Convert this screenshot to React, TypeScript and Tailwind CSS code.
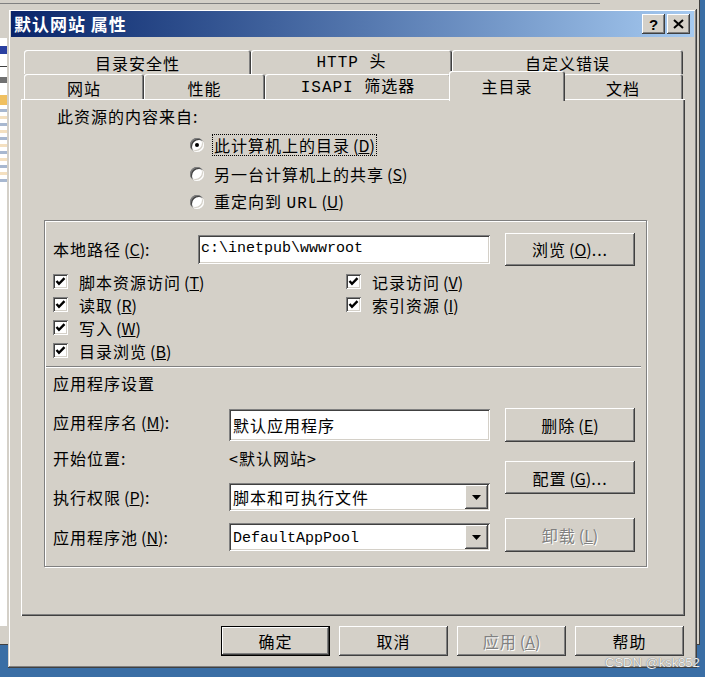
import React from "react";

const raised =
  "shadow-[inset_-1px_-1px_#404040,inset_1px_1px_#ffffff,inset_-2px_-2px_#808080,inset_2px_2px_#d4d0c8]";
const sunken =
  "shadow-[inset_1px_1px_#808080,inset_-1px_-1px_#ffffff,inset_2px_2px_#404040,inset_-2px_-2px_#d4d0c8]";
const mono = "font-['Liberation_Mono','Noto_Sans_CJK_SC',monospace]";
const dim = "text-[#808080] [text-shadow:1px_1px_0_#ffffff]";

const Key = ({ k }: { k: string }) => (
  <span className="ml-[3px] tracking-normal">
    (<u>{k}</u>)
  </span>
);

const Btn = ({
  children,
  className = "",
  disabled,
  primary,
}: {
  children: React.ReactNode;
  className?: string;
  disabled?: boolean;
  primary?: boolean;
}) => (
  <div
    className={`flex items-center justify-center bg-[#d4d0c8] ${
      primary
        ? "shadow-[inset_0_0_0_1px_#000000,inset_-2px_-2px_#404040,inset_2px_2px_#ffffff,inset_-3px_-3px_#808080]"
        : raised
    } ${disabled ? dim : ""} ${className}`}
  >
    {children}
  </div>
);

const Tab = ({ label, className = "" }: { label: React.ReactNode; className?: string }) => (
  <div
    className={`flex items-center justify-center rounded-t-[3px] bg-[#d4d0c8] pt-[2px] shadow-[inset_1px_1px_#ffffff,inset_-1px_0_#404040,inset_-2px_0_#808080] ${className}`}
  >
    {label}
  </div>
);

const Radio = ({
  label,
  checked,
  focused,
  className = "",
}: {
  label: React.ReactNode;
  checked?: boolean;
  focused?: boolean;
  className?: string;
}) => (
  <div className={`flex items-center ${className}`}>
    <div className={`flex h-[14px] w-[14px] items-center justify-center rounded-full bg-white ${sunken}`}>
      {checked && <div className="h-[4px] w-[4px] rounded-full bg-black" />}
    </div>
    <div
      className={`ml-[8px] px-[1px] leading-[20px] ${
        focused ? "border border-dotted border-black" : "border border-transparent"
      }`}
    >
      {label}
    </div>
  </div>
);

const Check = ({ label }: { label: React.ReactNode }) => (
  <div className="flex h-[23px] items-center">
    <div className={`flex h-[15px] w-[15px] items-center justify-center bg-white ${sunken}`}>
      <svg width="15" height="15" viewBox="0 0 15 15">
        <path d="M3.5 7 L6 9.8 L11.5 4.2" fill="none" stroke="#000" strokeWidth="2.4" />
      </svg>
    </div>
    <div className="ml-[11px] leading-[20px]">{label}</div>
  </div>
);

const Select = ({ value, className = "" }: { value: React.ReactNode; className?: string }) => (
  <div className={`flex h-[28px] w-[261px] items-center bg-white ${sunken} ${className}`}>
    <div className="flex-1 pl-[4px] leading-[20px]">{value}</div>
    <div className={`mr-[2px] flex h-[24px] w-[23px] items-center justify-center bg-[#d4d0c8] ${raised}`}>
      <svg width="9" height="5" viewBox="0 0 9 5">
        <polygon points="0,0 9,0 4.5,5" fill="#000" />
      </svg>
    </div>
  </div>
);

export default function App() {
  return (
    <div className="relative h-[677px] w-[705px] overflow-hidden bg-[#3a6ea5] font-['Noto_Sans_CJK_SC',sans-serif] text-[16px] tracking-[1px] text-black">
      {/* window behind the dialog */}
      <div className="absolute left-0 top-0 flex h-[645px] w-[700px] flex-col bg-[#d4d0c8] shadow-[inset_-1px_-1px_#404040]">
        <div className="mt-[3px] h-px w-[600px] bg-[#808080]" />
        <div className="mt-[34px] flex h-[588px] w-[7px] flex-col bg-white">
          <div className="mt-[8px] h-[8px] bg-[#2a3fa0]" />
          <div className="mt-[12px] h-px bg-[#404040]" />
          <div className="mt-[10px] h-[6px] bg-[#707070]" />
          <div className="mt-[12px] h-[10px] bg-[#f0c060]" />
          <div className="mt-[4px] h-[3px] bg-[#a8b8d0]" />
          <div className="mt-[4px] h-[3px] bg-[#f4e0c0]" />
          <div className="mt-[4px] h-[3px] bg-[#a8b8d0]" />
          <div className="mt-[4px] h-[3px] bg-[#f4e0c0]" />
          <div className="mt-[4px] h-[3px] bg-[#a8b8d0]" />
          <div className="mt-[4px] h-[3px] bg-[#f4e0c0]" />
          <div className="mt-[4px] h-[3px] bg-[#a8b8d0]" />
          <div className="mt-[4px] h-[3px] bg-[#f4e0c0]" />
          <div className="mt-[4px] h-[3px] bg-[#a8b8d0]" />
          <div className="mt-[4px] h-[3px] bg-[#f4e0c0]" />
          <div className="mt-[4px] h-[3px] bg-[#a8b8d0]" />
        </div>
      </div>

      {/* dialog */}
      <div className="absolute left-[8px] top-[9px] flex h-[659px] w-[689px] flex-col bg-[#d4d0c8] px-[3px] pt-[2px] shadow-[inset_-1px_-1px_#404040,inset_1px_1px_#d4d0c8,inset_-2px_-2px_#808080,inset_2px_2px_#ffffff]">
        <div className="flex h-[26px] items-center justify-between bg-linear-to-r from-[#0a246a] to-[#a6caf0] pl-[3px] pr-[4px]">
          <div className="text-[17px] font-bold leading-[22px] text-white">默认网站 属性</div>
          <div className="flex gap-[2px]">
            <div className={`flex h-[20px] w-[23px] items-center justify-center bg-[#d4d0c8] font-['Liberation_Sans',sans-serif] text-[15px] font-bold leading-none tracking-normal ${raised}`}>
              ?
            </div>
            <div className={`flex h-[20px] w-[23px] items-center justify-center bg-[#d4d0c8] ${raised}`}>
              <svg width="11" height="10" viewBox="0 0 11 10">
                <path d="M1 1 L10 9 M10 1 L1 9" stroke="#000" strokeWidth="2" />
              </svg>
            </div>
          </div>
        </div>

        <div className="ml-[10px] mt-[13px] flex w-[664px] flex-col">
          {/* tabs */}
          <div className="flex h-[24px] pl-[3px]">
            <Tab className="w-[227px]" label="目录安全性" />
            <Tab className={`w-[201px] ${mono}`} label="HTTP 头" />
            <Tab className="w-[231px]" label="自定义错误" />
          </div>
          <div className="flex h-[25px] items-end pl-[3px]">
            <Tab className="h-[25px] w-[120px]" label="网站" />
            <Tab className="h-[25px] w-[121px]" label="性能" />
            <Tab className={`h-[25px] w-[186px] ${mono}`} label="ISAPI 筛选器" />
            <div className="relative z-10 -mx-[2px] -mb-[2px] flex h-[30px] w-[116px] items-center justify-center rounded-t-[3px] bg-[#d4d0c8] shadow-[inset_1px_1px_#ffffff,inset_-1px_0_#404040,inset_-2px_0_#808080]">
              主目录
            </div>
            <Tab className="h-[25px] w-[120px]" label="文档" />
          </div>

          {/* panel */}
          <div className="flex h-[517px] flex-col bg-[#d4d0c8] shadow-[inset_1px_1px_#ffffff,inset_-1px_-1px_#404040,inset_-2px_-2px_#808080]">
            <div className="ml-[36px] mt-[7px] h-[20px] leading-[20px]">此资源的内容来自:</div>
            <div className="ml-[169px] mt-[5px] flex flex-col">
              <Radio className="h-[28px]" checked focused label={<>此计算机上的目录<Key k="D" /></>} />
              <Radio className="h-[29px]" label={<>另一台计算机上的共享<Key k="S" /></>} />
              <Radio className="h-[28px]" label={<>重定向到 <span className={mono}>URL</span><Key k="U" /></>} />
            </div>

            {/* group box */}
            <div className="ml-[23px] mt-[4px] flex h-[347px] w-[603px] flex-col border border-[#808080] shadow-[inset_1px_1px_#ffffff,1px_1px_#ffffff]">
              <div className="ml-[8px] mt-[11px] flex h-[34px] items-center">
                <div className="w-[145px] leading-[20px]">
                  本地路径<Key k="C" />:
                </div>
                <div className={`flex h-[29px] w-[292px] items-center bg-white pl-[3px] text-[15px] tracking-normal ${sunken} ${mono}`}>
                  c:\inetpub\wwwroot
                </div>
                <Btn className="ml-[15px] h-[33px] w-[130px]">
                  浏览<Key k="O" />...
                </Btn>
              </div>

              <div className="ml-[8px] mt-[4px] flex">
                <div className="flex w-[293px] flex-col">
                  <Check label={<>脚本资源访问<Key k="T" /></>} />
                  <Check label={<>读取<Key k="R" /></>} />
                  <Check label={<>写入<Key k="W" /></>} />
                  <Check label={<>目录浏览<Key k="B" /></>} />
                </div>
                <div className="flex flex-col">
                  <Check label={<>记录访问<Key k="V" /></>} />
                  <Check label={<>索引资源<Key k="I" /></>} />
                </div>
              </div>

              <div className="ml-[1px] mt-[4px] h-px w-[595px] bg-[#808080] shadow-[0_1px_#ffffff]" />
              <div className="ml-[8px] mt-[5px] h-[22px] leading-[22px]">应用程序设置</div>

              <div className="ml-[8px] mt-[14px] flex">
                <div className="flex flex-col">
                  <div className="flex h-[34px] items-center">
                    <div className="mb-[6px] w-[176px] leading-[20px]">
                      应用程序名<Key k="M" />:
                    </div>
                    <div className={`flex h-[32px] w-[261px] items-center bg-white pl-[4px] ${sunken}`}>默认应用程序</div>
                  </div>
                  <div className="flex h-[32px] items-center">
                    <div className="w-[176px] leading-[20px]">开始位置:</div>
                    <div className="leading-[20px]">&lt;默认网站&gt;</div>
                  </div>
                  <div className="mt-[8px] flex h-[30px] items-center">
                    <div className="w-[176px] leading-[20px]">
                      执行权限<Key k="P" />:
                    </div>
                    <Select value="脚本和可执行文件" />
                  </div>
                  <div className="mt-[10px] flex h-[30px] items-center">
                    <div className="w-[176px] leading-[20px]">
                      应用程序池<Key k="N" />:
                    </div>
                    <Select value={<span className={`text-[15px] tracking-normal ${mono}`}>DefaultAppPool</span>} />
                  </div>
                </div>
                <div className="ml-[15px] flex flex-col">
                  <Btn className="h-[34px] w-[130px]">
                    删除<Key k="E" />
                  </Btn>
                  <Btn className="mt-[19px] h-[33px] w-[130px]">
                    配置<Key k="G" />...
                  </Btn>
                  <Btn disabled className="mt-[24px] h-[34px] w-[130px]">
                    卸载<Key k="L" />
                  </Btn>
                </div>
              </div>
            </div>
          </div>

          {/* dialog buttons */}
          <div className="mt-[10px] flex justify-end gap-[9px] pr-[1px]">
            <Btn primary className="h-[30px] w-[109px]">确定</Btn>
            <Btn className="h-[30px] w-[109px]">取消</Btn>
            <Btn disabled className="h-[30px] w-[109px]">
              应用<Key k="A" />
            </Btn>
            <Btn className="h-[30px] w-[109px]">帮助</Btn>
          </div>
        </div>
      </div>

      <div className="absolute left-[605px] top-[656px] font-['Liberation_Sans',sans-serif] text-[13px] leading-[14px] tracking-normal text-[#f0f0f0] [text-shadow:0_0_1px_#505050]">
        CSDN @ksk852
      </div>
    </div>
  );
}
